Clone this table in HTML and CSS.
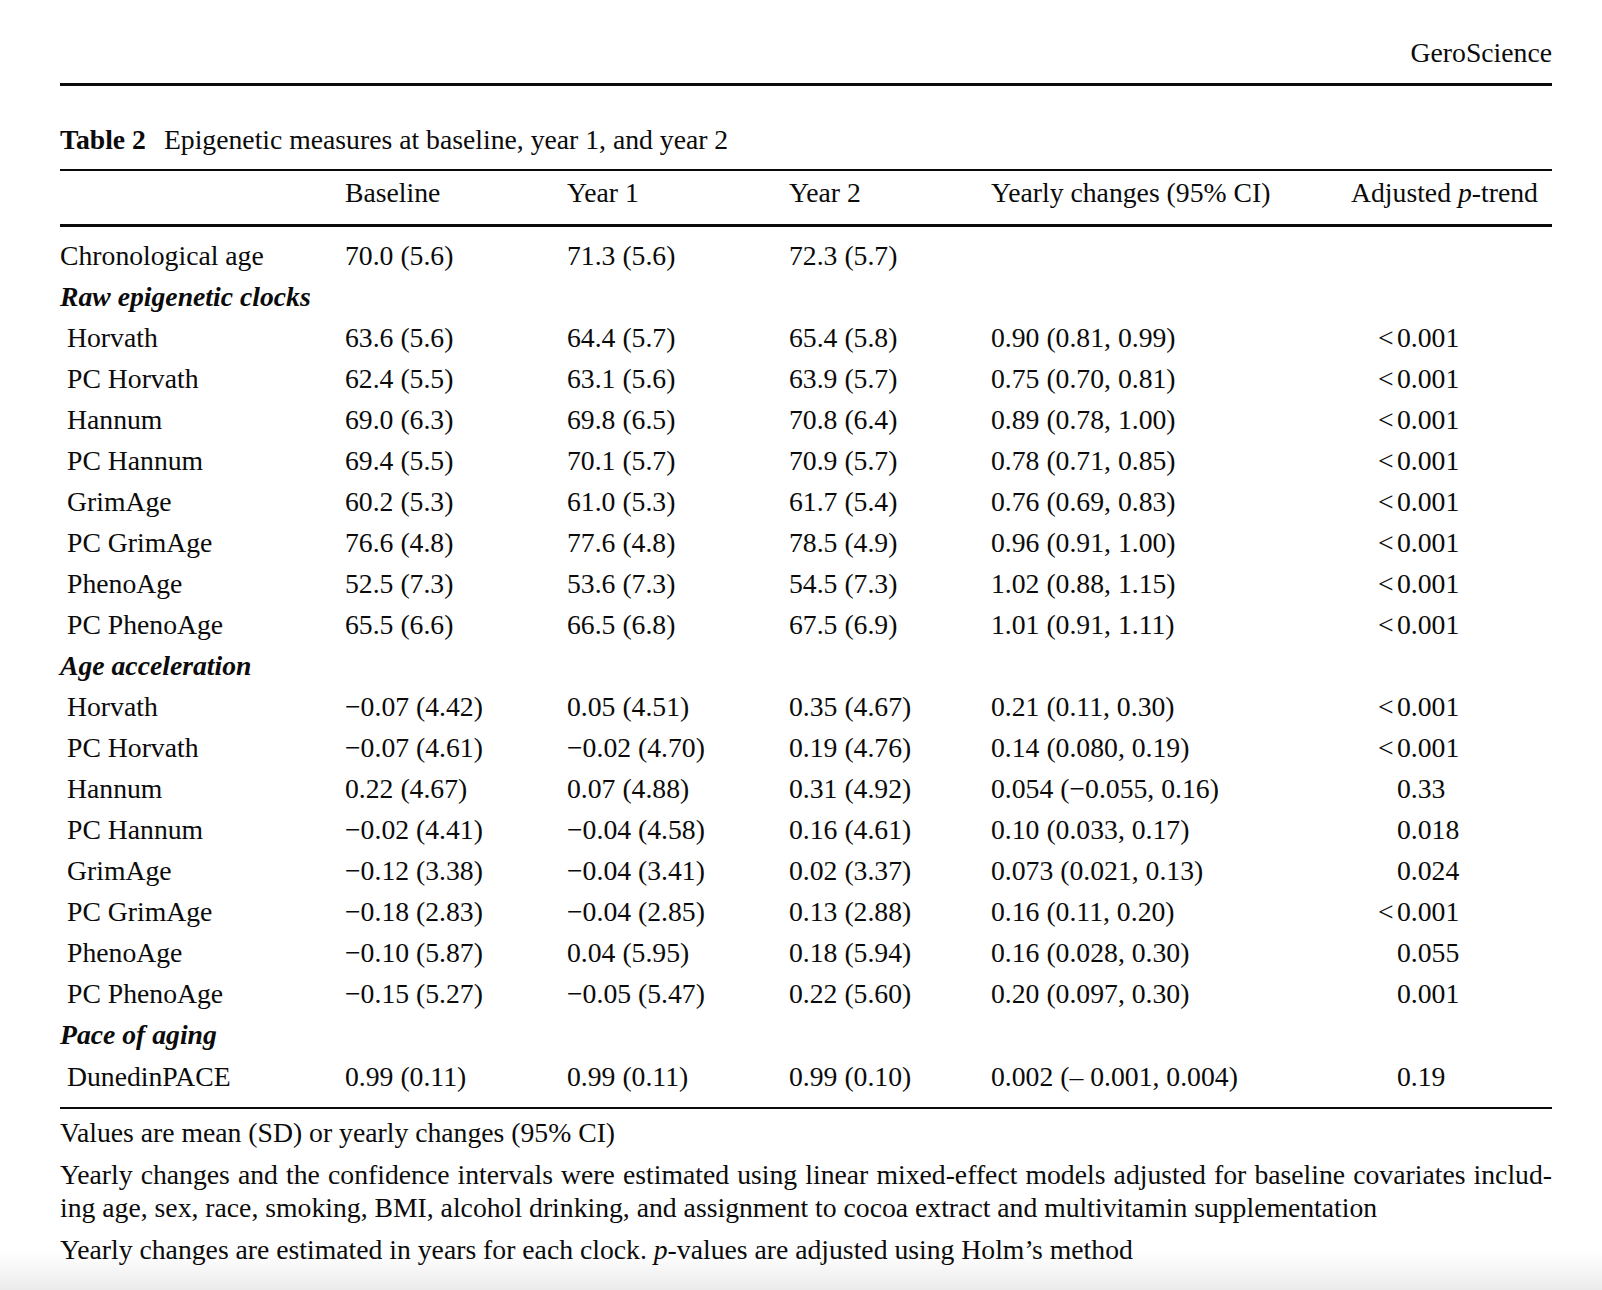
FILE: index.html
```html
<!DOCTYPE html>
<html lang="en">
<head>
<meta charset="utf-8">
<title>Table 2 – GeroScience</title>
<link rel="stylesheet" href="styles.css">
</head>
<body>
<div class="page">
  <div class="running-head">GeroScience</div>
  <div class="head-rule"></div>
  <div class="caption"><span class="caption-label">Table 2</span>Epigenetic measures at baseline, year 1, and year 2</div>
  <table class="data">
    <colgroup>
      <col class="c-label"><col class="c-base"><col class="c-y1"><col class="c-y2"><col class="c-change"><col class="c-p">
    </colgroup>
    <thead>
      <tr>
        <th></th>
        <th>Baseline</th>
        <th>Year 1</th>
        <th>Year 2</th>
        <th>Yearly changes (95% CI)</th>
        <th>Adjusted <i>p</i>-trend</th>
      </tr>
    </thead>
    <tbody>
      <tr class="first"><td>Chronological age</td><td>70.0 (5.6)</td><td>71.3 (5.6)</td><td>72.3 (5.7)</td><td></td><td></td></tr>
      <tr class="section"><td colspan="6">Raw epigenetic clocks</td></tr>
      <tr><td class="sub">Horvath</td><td>63.6 (5.6)</td><td>64.4 (5.7)</td><td>65.4 (5.8)</td><td>0.90 (0.81, 0.99)</td><td class="p"><span class="lt">&lt;</span>0.001</td></tr>
      <tr><td class="sub">PC Horvath</td><td>62.4 (5.5)</td><td>63.1 (5.6)</td><td>63.9 (5.7)</td><td>0.75 (0.70, 0.81)</td><td class="p"><span class="lt">&lt;</span>0.001</td></tr>
      <tr><td class="sub">Hannum</td><td>69.0 (6.3)</td><td>69.8 (6.5)</td><td>70.8 (6.4)</td><td>0.89 (0.78, 1.00)</td><td class="p"><span class="lt">&lt;</span>0.001</td></tr>
      <tr><td class="sub">PC Hannum</td><td>69.4 (5.5)</td><td>70.1 (5.7)</td><td>70.9 (5.7)</td><td>0.78 (0.71, 0.85)</td><td class="p"><span class="lt">&lt;</span>0.001</td></tr>
      <tr><td class="sub">GrimAge</td><td>60.2 (5.3)</td><td>61.0 (5.3)</td><td>61.7 (5.4)</td><td>0.76 (0.69, 0.83)</td><td class="p"><span class="lt">&lt;</span>0.001</td></tr>
      <tr><td class="sub">PC GrimAge</td><td>76.6 (4.8)</td><td>77.6 (4.8)</td><td>78.5 (4.9)</td><td>0.96 (0.91, 1.00)</td><td class="p"><span class="lt">&lt;</span>0.001</td></tr>
      <tr><td class="sub">PhenoAge</td><td>52.5 (7.3)</td><td>53.6 (7.3)</td><td>54.5 (7.3)</td><td>1.02 (0.88, 1.15)</td><td class="p"><span class="lt">&lt;</span>0.001</td></tr>
      <tr><td class="sub">PC PhenoAge</td><td>65.5 (6.6)</td><td>66.5 (6.8)</td><td>67.5 (6.9)</td><td>1.01 (0.91, 1.11)</td><td class="p"><span class="lt">&lt;</span>0.001</td></tr>
      <tr class="section"><td colspan="6">Age acceleration</td></tr>
      <tr><td class="sub">Horvath</td><td>&minus;0.07 (4.42)</td><td>0.05 (4.51)</td><td>0.35 (4.67)</td><td>0.21 (0.11, 0.30)</td><td class="p"><span class="lt">&lt;</span>0.001</td></tr>
      <tr><td class="sub">PC Horvath</td><td>&minus;0.07 (4.61)</td><td>&minus;0.02 (4.70)</td><td>0.19 (4.76)</td><td>0.14 (0.080, 0.19)</td><td class="p"><span class="lt">&lt;</span>0.001</td></tr>
      <tr><td class="sub">Hannum</td><td>0.22 (4.67)</td><td>0.07 (4.88)</td><td>0.31 (4.92)</td><td>0.054 (&minus;0.055, 0.16)</td><td class="p">0.33</td></tr>
      <tr><td class="sub">PC Hannum</td><td>&minus;0.02 (4.41)</td><td>&minus;0.04 (4.58)</td><td>0.16 (4.61)</td><td>0.10 (0.033, 0.17)</td><td class="p">0.018</td></tr>
      <tr><td class="sub">GrimAge</td><td>&minus;0.12 (3.38)</td><td>&minus;0.04 (3.41)</td><td>0.02 (3.37)</td><td>0.073 (0.021, 0.13)</td><td class="p">0.024</td></tr>
      <tr><td class="sub">PC GrimAge</td><td>&minus;0.18 (2.83)</td><td>&minus;0.04 (2.85)</td><td>0.13 (2.88)</td><td>0.16 (0.11, 0.20)</td><td class="p"><span class="lt">&lt;</span>0.001</td></tr>
      <tr><td class="sub">PhenoAge</td><td>&minus;0.10 (5.87)</td><td>0.04 (5.95)</td><td>0.18 (5.94)</td><td>0.16 (0.028, 0.30)</td><td class="p">0.055</td></tr>
      <tr><td class="sub">PC PhenoAge</td><td>&minus;0.15 (5.27)</td><td>&minus;0.05 (5.47)</td><td>0.22 (5.60)</td><td>0.20 (0.097, 0.30)</td><td class="p">0.001</td></tr>
      <tr class="section"><td colspan="6">Pace of aging</td></tr>
      <tr class="last"><td class="sub">DunedinPACE</td><td>0.99 (0.11)</td><td>0.99 (0.11)</td><td>0.99 (0.10)</td><td>0.002 (&ndash; 0.001, 0.004)</td><td class="p">0.19</td></tr>
    </tbody>
  </table>
  <div class="notes">
    <p class="note">Values are mean (SD) or yearly changes (95% CI)</p>
    <p class="note"><span class="line justified">Yearly changes and the confidence intervals were estimated using linear mixed-effect models adjusted for baseline covariates includ-</span><span class="line">ing age, sex, race, smoking, BMI, alcohol drinking, and assignment to cocoa extract and multivitamin supplementation</span></p>
    <p class="note">Yearly changes are estimated in years for each clock. <i>p</i>-values are adjusted using Holm’s method</p>
  </div>
</div>
</body>
</html>
```

FILE: styles.css
```css
html {
  margin: 0;
  padding: 0;
}

body {
  margin: 0;
  height: 1290px;
  overflow: hidden;
  color: #0b0b0b;
  font-family: "Liberation Serif", "Times New Roman", serif;
  font-size: 27.7px;
  background: linear-gradient(to bottom, #ffffff 0, #ffffff 1252px, #ebebeb 1290px);
}

.page {
  width: 1492px;
  padding: 38px 50px 0 60px;
}

.running-head {
  line-height: 30px;
  text-align: right;
}

.head-rule {
  margin-top: 15px;
  height: 3px;
  background: #0b0b0b;
}

.caption {
  margin-top: 39px;
  line-height: 30px;
}

.caption-label {
  font-weight: bold;
  margin-right: 18px;
}

.data {
  margin-top: 14px;
  width: 1492px;
  border-collapse: collapse;
  table-layout: fixed;
  border-top: 2px solid #0b0b0b;
  border-bottom: 2px solid #0b0b0b;
}

.c-label { width: 285px; }
.c-base { width: 222px; }
.c-y1 { width: 222px; }
.c-y2 { width: 202px; }
.c-change { width: 360px; }
.c-p { width: 201px; }

.data thead tr {
  border-bottom: 3px solid #0b0b0b;
}

.data th {
  font-weight: normal;
  text-align: left;
  line-height: 30px;
  padding: 7px 0 16px 0;
  white-space: nowrap;
}

.data td {
  padding: 0;
  height: 41px;
  line-height: 41px;
  white-space: nowrap;
  vertical-align: top;
}

.data tr.first td {
  padding-top: 8px;
}

.data tr.last td {
  padding-top: 1px;
  padding-bottom: 10px;
}

.data tr.section td {
  font-weight: bold;
  font-style: italic;
}

.data td.sub {
  padding-left: 7px;
}

.data td.p {
  padding-left: 46px;
}

.lt {
  display: inline-block;
  width: 19px;
  margin-left: -19px;
}

.notes {
  padding-top: 7px;
}

.note {
  margin: 0 0 9px 0;
  line-height: 33px;
}

.line {
  display: block;
}

.justified {
  text-align: justify;
  text-align-last: justify;
}
```
